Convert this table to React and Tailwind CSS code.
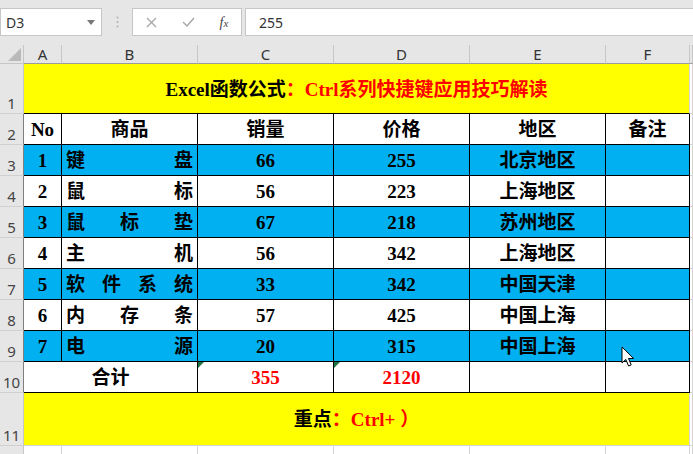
import React from "react";

const serif = "font-['Liberation_Serif','Noto_Sans_CJK_SC',serif]";
const BLUE = "bg-[#00b0f0]";

const rows = [
  [1, ["键", "盘"], 66, 255, "北京地区", true],
  [2, ["鼠", "标"], 56, 223, "上海地区", false],
  [3, ["鼠", "标", "垫"], 67, 218, "苏州地区", true],
  [4, ["主", "机"], 56, 342, "上海地区", false],
  [5, ["软", "件", "系", "统"], 33, 342, "中国天津", true],
  [6, ["内", "存", "条"], 57, 425, "中国上海", false],
  [7, ["电", "源"], 20, 315, "中国上海", true],
];

function RowHead({ n, h, dark, top }) {
  return (
    <div
      className={`${h} flex ${top ? "items-start pt-[1px]" : "items-end pb-[2px]"} justify-center bg-[#e6e6e6] border-b border-r ${
        dark ? "border-r-[#7f7f7f]" : "border-r-[#c6c6c6]"
      } border-b-[#d0d0d0] text-[15px] leading-none text-[#444] font-['Noto_Sans',sans-serif]`}
    >
      {n}
    </div>
  );
}

function Cell({ children, className = "" }) {
  return (
    <div className={`h-[31px] pt-[3px] border-r border-b border-black flex items-center justify-center ${className}`}>
      {children}
    </div>
  );
}

function Grid() {
  return <div className="border-r border-b border-[#d4d4d4] bg-white" />;
}

function GreenTri() {
  return (
    <svg className="absolute left-0 top-0" width="6" height="6" viewBox="0 0 6 6">
      <path d="M0 0H6L0 6Z" fill="#217346" />
    </svg>
  );
}

export default function App() {
  const cols = "grid grid-cols-[24px_38px_136px_136px_136px_136px_84px_1fr]";
  return (
    <div className="w-[693px] h-[454px] overflow-hidden bg-white relative select-none">
      {/* formula bar */}
      <div className="h-[45px] bg-[#e6e6e6] flex items-start pt-[8px] gap-0">
        <div className="w-[102px] h-[28px] bg-white border border-[#c6c6c6] flex items-center justify-between pl-[5px] pr-[6px]">
          <span className="text-[14px] text-[#333] font-['Noto_Sans',sans-serif]">D3</span>
          <svg width="8" height="5" viewBox="0 0 8 5">
            <path d="M0 0H8L4 5Z" fill="#777" />
          </svg>
        </div>
        <div className="w-[30px] h-[28px] flex items-center justify-center">
          <svg width="3" height="12" viewBox="0 0 3 12">
            <circle cx="1.5" cy="1.5" r="1" fill="#b0b0b0" />
            <circle cx="1.5" cy="6" r="1" fill="#b0b0b0" />
            <circle cx="1.5" cy="10.5" r="1" fill="#b0b0b0" />
          </svg>
        </div>
        <div className="w-[110px] h-[28px] bg-white border border-[#c6c6c6] flex items-center">
          <div className="w-[36px] flex justify-center">
            <svg width="11" height="11" viewBox="0 0 11 11">
              <path d="M1 1L10 10M10 1L1 10" stroke="#a6a6a6" strokeWidth="1.3" />
            </svg>
          </div>
          <div className="w-[38px] flex justify-center">
            <svg width="13" height="10" viewBox="0 0 13 10">
              <path d="M1 5L5 9L12 1" stroke="#a6a6a6" strokeWidth="1.4" fill="none" />
            </svg>
          </div>
          <div className="w-[34px] flex justify-center">
            <span className="text-[14px] italic text-[#444] font-['Liberation_Serif',serif]">
              f<span className="text-[11px]">x</span>
            </span>
          </div>
        </div>
        <div className="ml-[3px] flex-1 h-[28px] bg-white border-y border-l border-[#c6c6c6] flex items-center pl-[13px] text-[14px] text-[#333] font-['Noto_Sans',sans-serif]">
          255
        </div>
      </div>

      {/* sheet */}
      <div className={cols}>
        {/* column headers */}
        <div className="h-[19px] bg-[#e6e6e6] border-r border-b border-[#c6c6c6] flex items-end justify-end pr-[2px] pb-[2px]">
          <svg width="13" height="13" viewBox="0 0 13 13">
            <path d="M13 0V13H0Z" fill="#b9b9b9" />
          </svg>
        </div>
        {["A", "B", "C", "D", "E", "F", ""].map((c, i) => (
          <div
            key={i}
            className="h-[19px] bg-[#e6e6e6] border-r border-b border-r-[#c6c6c6] border-b-[#9b9b9b] flex items-center justify-center text-[15px] text-[#333] font-['Noto_Sans',sans-serif]"
          >
            {c}
          </div>
        ))}

        {/* row 1 */}
        <RowHead n="1" h="h-[50px]" />
        <div
          className={`col-span-6 h-[50px] pt-[3px] bg-[#ffff00] border-b border-b-black border-r border-r-[#d4d4d4] flex items-center justify-center text-[19px] font-bold ${serif} text-black`}
        >
          Excel函数公式<span className="text-[#ff0000]">：Ctrl系列快捷键应用技巧解读</span>
        </div>
        <Grid />

        {/* row 2 header */}
        <RowHead n="2" h="h-[31px]" dark />
        {["No", "商品", "销量", "价格", "地区", "备注"].map((t) => (
          <Cell key={t} className={`bg-white text-[19px] font-bold ${serif}`}>
            {t}
          </Cell>
        ))}
        <Grid />

        {/* data rows */}
        {rows.map(([no, name, qty, price, area, blue], i) => (
          <React.Fragment key={no}>
            <RowHead n={String(i + 3)} h="h-[31px]" dark />
            <Cell className={`${blue ? BLUE : "bg-white"} text-[19px] font-bold ${serif}`}>{no}</Cell>
            <Cell className={`${blue ? BLUE : "bg-white"} !justify-between px-[4px] text-[19px] font-bold ${serif}`}>
              {name.map((ch, k) => (
                <span key={k}>{ch}</span>
              ))}
            </Cell>
            <Cell className={`${blue ? BLUE : "bg-white"} text-[19px] font-bold ${serif}`}>{qty}</Cell>
            <Cell className={`${blue ? BLUE : "bg-white"} text-[19px] font-bold ${serif}`}>{price}</Cell>
            <Cell className={`${blue ? BLUE : "bg-white"} text-[19px] font-bold ${serif}`}>{area}</Cell>
            <Cell className={blue ? BLUE : "bg-white"} />
            <Grid />
          </React.Fragment>
        ))}

        {/* row 10 totals */}
        <RowHead n="10" h="h-[31px]" dark />
        <div className={`col-span-2 h-[31px] pt-[3px] border-r border-b border-black bg-white flex items-center justify-center text-[19px] font-bold ${serif}`}>
          合计
        </div>
        <Cell className={`relative bg-white text-[19px] font-bold text-[#ff0000] ${serif}`}>
          <GreenTri />
          355
        </Cell>
        <Cell className={`relative bg-white text-[19px] font-bold text-[#ff0000] ${serif}`}>
          <GreenTri />
          2120
        </Cell>
        <Cell className="bg-white" />
        <Cell className="bg-white" />
        <Grid />

        {/* row 11 */}
        <RowHead n="11" h="h-[53px]" />
        <div
          className={`col-span-6 h-[53px] pt-[3px] bg-[#ffff00] border-b border-r border-[#d4d4d4] flex items-center justify-center text-[19px] font-bold ${serif} text-black`}
        >
          重点<span className="text-[#ff0000]">：Ctrl+ ）</span>
        </div>
        <Grid />

        {/* row 12 */}
        <RowHead n="" h="h-[31px]" />
        {[0, 1, 2, 3, 4, 5, 6].map((k) => (
          <div key={k} className="h-[31px] border-r border-b border-[#d4d4d4] bg-white" />
        ))}
      </div>

      {/* mouse cursor */}
      <svg className="absolute left-[621px] top-[346px]" width="14" height="22" viewBox="0 0 14 22">
        <path
          d="M1 1V17L4.8 13.4L7.6 20L10.2 18.9L7.5 12.5H12.6Z"
          fill="#fff"
          stroke="#000"
          strokeWidth="1"
          strokeLinejoin="round"
        />
      </svg>
    </div>
  );
}
